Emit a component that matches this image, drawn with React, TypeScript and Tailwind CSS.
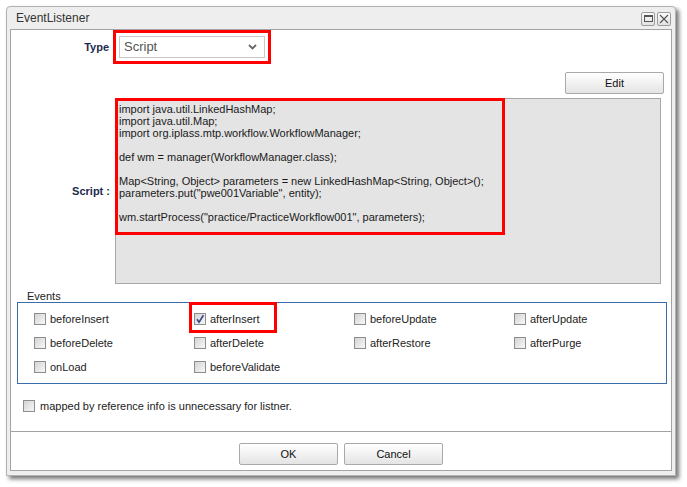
import { type ReactNode } from "react";

const codeText = `import java.util.LinkedHashMap;
import java.util.Map;
import org.iplass.mtp.workflow.WorkflowManager;

def wm = manager(WorkflowManager.class);

Map<String, Object> parameters = new LinkedHashMap<String, Object>();
parameters.put("pwe001Variable", entity);

wm.startProcess("practice/PracticeWorkflow001", parameters);`;

const eventRows = [
  ["beforeInsert", "afterInsert", "beforeUpdate", "afterUpdate"],
  ["beforeDelete", "afterDelete", "afterRestore", "afterPurge"],
  ["onLoad", "beforeValidate"],
];

const CheckBox = ({ checked = false }: { checked?: boolean }) => (
  <span className="relative flex h-[12px] w-[12px] shrink-0 items-center justify-center border border-[#8e8e8e] bg-linear-to-br from-[#d4d4d4] to-[#f7f7f7]">
    {checked && (
      <svg width="10" height="10" viewBox="0 0 10 10" className="absolute left-[0px] top-[0px]">
        <path d="M2 5.2 L4 8.2 L8.4 1.2" fill="none" stroke="#34488a" strokeWidth="1.6" />
      </svg>
    )}
  </span>
);

const Button = ({ children, className = "" }: { children: ReactNode; className?: string }) => (
  <button
    className={`flex h-[22px] w-[99px] items-center justify-center rounded-[2px] border border-[#a9a9a9] bg-linear-to-b from-[#ffffff] to-[#e4e4e4] text-[11px] text-[#111] ${className}`}
  >
    {children}
  </button>
);

const TitleButton = ({ children }: { children: ReactNode }) => (
  <span className="flex h-[14px] w-[14px] items-center justify-center rounded-[2px] border border-[#9c9c9c] bg-linear-to-b from-[#fafafa] to-[#e2e2e2]">
    {children}
  </span>
);

const App = () => {
  return (
    <div className="h-[487px] w-[687px] bg-white pl-[6px] pt-[6px] font-['Liberation_Sans',Arial,sans-serif]">
      <div className="flex h-[470px] w-[670px] flex-col rounded-t-[4px] border border-[#b2b2b2] bg-[#eeeeee] px-[3px] pb-[4px] shadow-[3px_3px_4px_rgba(0,0,0,0.55)]">
        {/* title bar */}
        <div className="flex h-[22px] items-center justify-between pl-[6px] pr-[1px]">
          <span className="text-[12px] text-[#333]">EventListener</span>
          <div className="mt-[1px] flex gap-[2px]">
            <TitleButton>
              <span className="h-[7px] w-[9px] border border-t-[2px] border-[#555]" />
            </TitleButton>
            <TitleButton>
              <svg width="10" height="10" viewBox="0 0 10 10">
                <path d="M1 1 L9 9 M9 1 L1 9" stroke="#555" strokeWidth="1.1" />
              </svg>
            </TitleButton>
          </div>
        </div>

        {/* content panel */}
        <div className="flex h-[442px] flex-col border border-[#a3a3a3] bg-white">
          <div className="flex h-[401px] flex-col">
            {/* type row */}
            <div className="flex items-center">
              <span className="w-[98px] text-right text-[11px] font-bold text-[#1b2b4d]">Type</span>
              <div className="ml-[4px] border-[3px] border-[#ff0000] p-[3px]">
                <div className="flex h-[22px] w-[146px] items-center justify-between border border-[#c9c9c9] bg-white pl-[4px] pr-[7px]">
                  <span className="text-[13px] text-[#555]">Script</span>
                  <svg width="9" height="6" viewBox="0 0 9 6">
                    <path d="M1 1 L4.5 4.5 L8 1" fill="none" stroke="#666" strokeWidth="1.8" />
                  </svg>
                </div>
              </div>
            </div>

            {/* edit button */}
            <div className="mt-[8px] flex justify-end pr-[7px]">
              <Button>Edit</Button>
            </div>

            {/* script row */}
            <div className="mt-[4px] flex items-center">
              <span className="w-[99px] text-right text-[11px] font-bold text-[#1b2b4d]">Script :</span>
              <div className="relative ml-[5px] h-[186px] w-[546px] border border-[#a8a8a8] bg-[#e4e4e4] pl-[3px] pt-[4px]">
                <pre className="whitespace-pre font-['Liberation_Sans',Arial,sans-serif] text-[11px] leading-[12px] text-[#1a1a1a]">
                  {codeText}
                </pre>
                <div className="absolute -left-[1px] -top-[1px] h-[137px] w-[390px] border-[3px] border-[#ff0000]" />
              </div>
            </div>

            {/* events */}
            <div className="relative ml-[6px] mr-[4px] mt-[18px] border border-[#3b6ea8] px-[16px] py-[4px]">
              <span className="absolute left-[6px] -top-[13px] bg-white px-[3px] text-[11px] leading-[12px] text-[#222]">
                Events
              </span>
              {eventRows.map((row, r) => (
                <div key={r} className="grid h-[24px] grid-cols-[160px_160px_160px_160px]">
                  {row.map((name) => (
                    <div key={name} className="relative flex items-center gap-[4px]">
                      <CheckBox checked={name === "afterInsert"} />
                      <span className="text-[11px] text-[#222]">{name}</span>
                      {name === "afterInsert" && (
                        <div className="absolute -left-[5px] -top-[5px] h-[31px] w-[88px] border-[3px] border-[#ff0000]" />
                      )}
                    </div>
                  ))}
                </div>
              ))}
            </div>

            <div className="ml-[12px] mt-[12px] flex h-[20px] items-center gap-[5px]">
              <CheckBox />
              <span className="text-[11px] text-[#222]">mapped by reference info is unnecessary for listner.</span>
            </div>
          </div>

          {/* footer */}
          <div className="flex flex-1 justify-center gap-[6px] border-t border-[#a3a3a3] pt-[11px]">
            <Button>OK</Button>
            <Button>Cancel</Button>
          </div>
        </div>
      </div>
    </div>
  );
};

export default App;
